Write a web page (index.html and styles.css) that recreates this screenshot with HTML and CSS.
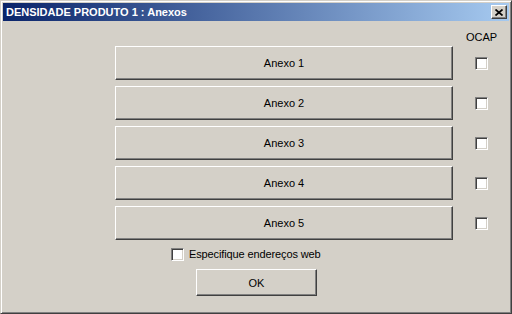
FILE: index.html
```html
<!DOCTYPE html>
<html>
    <head>
        <title>DENSIDADE PRODUTO 1 : Anexos</title>
        <link rel="stylesheet" href="styles.css">
    </head>
    <body>
        <div class="window">
            <div class="title-bar">
                <span class="title-text">DENSIDADE PRODUTO 1 : Anexos</span>
                <button class="close-btn">
                    <svg width="8" height="7" viewBox="0 0 8 7">
                        <path d="M0.5 0.5 L7.5 6.5 M7.5 0.5 L0.5 6.5" stroke="#000" stroke-width="1.7" fill="none" />
                    </svg>
                </button>
            </div>
            <div class="dialog-body">
                <div class="row header-row">
                    <div class="btn-spacer"></div>
                    <div class="check-cell ocap">OCAP</div>
                </div>
                <div class="row">
                    <button class="push-btn anexo">Anexo 1</button>
                    <div class="check-cell"><span class="checkbox"></span></div>
                </div>
                <div class="row">
                    <button class="push-btn anexo">Anexo 2</button>
                    <div class="check-cell"><span class="checkbox"></span></div>
                </div>
                <div class="row">
                    <button class="push-btn anexo">Anexo 3</button>
                    <div class="check-cell"><span class="checkbox"></span></div>
                </div>
                <div class="row">
                    <button class="push-btn anexo">Anexo 4</button>
                    <div class="check-cell"><span class="checkbox"></span></div>
                </div>
                <div class="row">
                    <button class="push-btn anexo">Anexo 5</button>
                    <div class="check-cell"><span class="checkbox"></span></div>
                </div>
                <label class="web-row">
                    <span class="checkbox"></span>
                    <span class="web-text">Especifique endereços web</span>
                </label>
                <button class="push-btn ok">OK</button>
            </div>
        </div>
    </body>
</html>
```

FILE: styles.css
```css
body {
    margin: 0;
    font-family: "Liberation Sans", Arial, sans-serif;
    font-size: 11px;
    color: #000;
}
.window {
    width: 512px;
    height: 314px;
    box-sizing: border-box;
    background-color: #d4d0c8;
    border: 1px solid;
    border-color: #d4d0c8 #404040 #404040 #d4d0c8;
    box-shadow: inset 1px 1px #fff, inset -1px -1px #808080;
    padding: 2px;
}
.title-bar {
    height: 18px;
    display: flex;
    align-items: center;
    justify-content: space-between;
    padding: 0 2px 0 3px;
    background: linear-gradient(90deg, #0a246a, #a6caf0);
}
.title-text {
    color: #fff;
    font-weight: bold;
    font-size: 11px;
    line-height: 13px;
}
.close-btn {
    width: 16px;
    height: 14px;
    padding: 0;
    box-sizing: border-box;
    display: flex;
    align-items: center;
    justify-content: center;
    background-color: #d4d0c8;
    border: 1px solid;
    border-color: #fff #404040 #404040 #fff;
    box-shadow: inset -1px -1px #808080;
}
.dialog-body {
    display: flex;
    flex-direction: column;
    align-items: flex-start;
    padding-top: 10px;
}
.row {
    display: flex;
    margin-left: 112px;
    margin-bottom: 6px;
}
.header-row {
    height: 15px;
    margin-bottom: 0;
}
.btn-spacer {
    width: 338px;
}
.check-cell {
    width: 41px;
    margin-left: 8px;
    display: flex;
    align-items: center;
    justify-content: center;
}
.ocap {
    align-items: flex-start;
    line-height: 13px;
}
.push-btn {
    box-sizing: border-box;
    padding: 0;
    font-family: inherit;
    font-size: 11px;
    color: #000;
    background-color: #d4d0c8;
    border: 1px solid;
    border-color: #fff #404040 #404040 #fff;
    box-shadow: inset -1px -1px #808080;
}
.anexo {
    width: 338px;
    height: 34px;
}
.checkbox {
    display: inline-block;
    width: 13px;
    height: 13px;
    box-sizing: border-box;
    background-color: #fff;
    border: 1px solid;
    border-color: #808080 #fff #fff #808080;
    box-shadow: inset 1px 1px #404040, inset -1px -1px #d4d0c8;
}
.web-row {
    display: flex;
    align-items: center;
    margin: 2px 0 0 168px;
}
.web-text {
    margin-left: 5px;
    line-height: 13px;
    letter-spacing: -0.12px;
}
.ok {
    width: 121px;
    height: 27px;
    margin: 8px 0 0 193px;
}
```
